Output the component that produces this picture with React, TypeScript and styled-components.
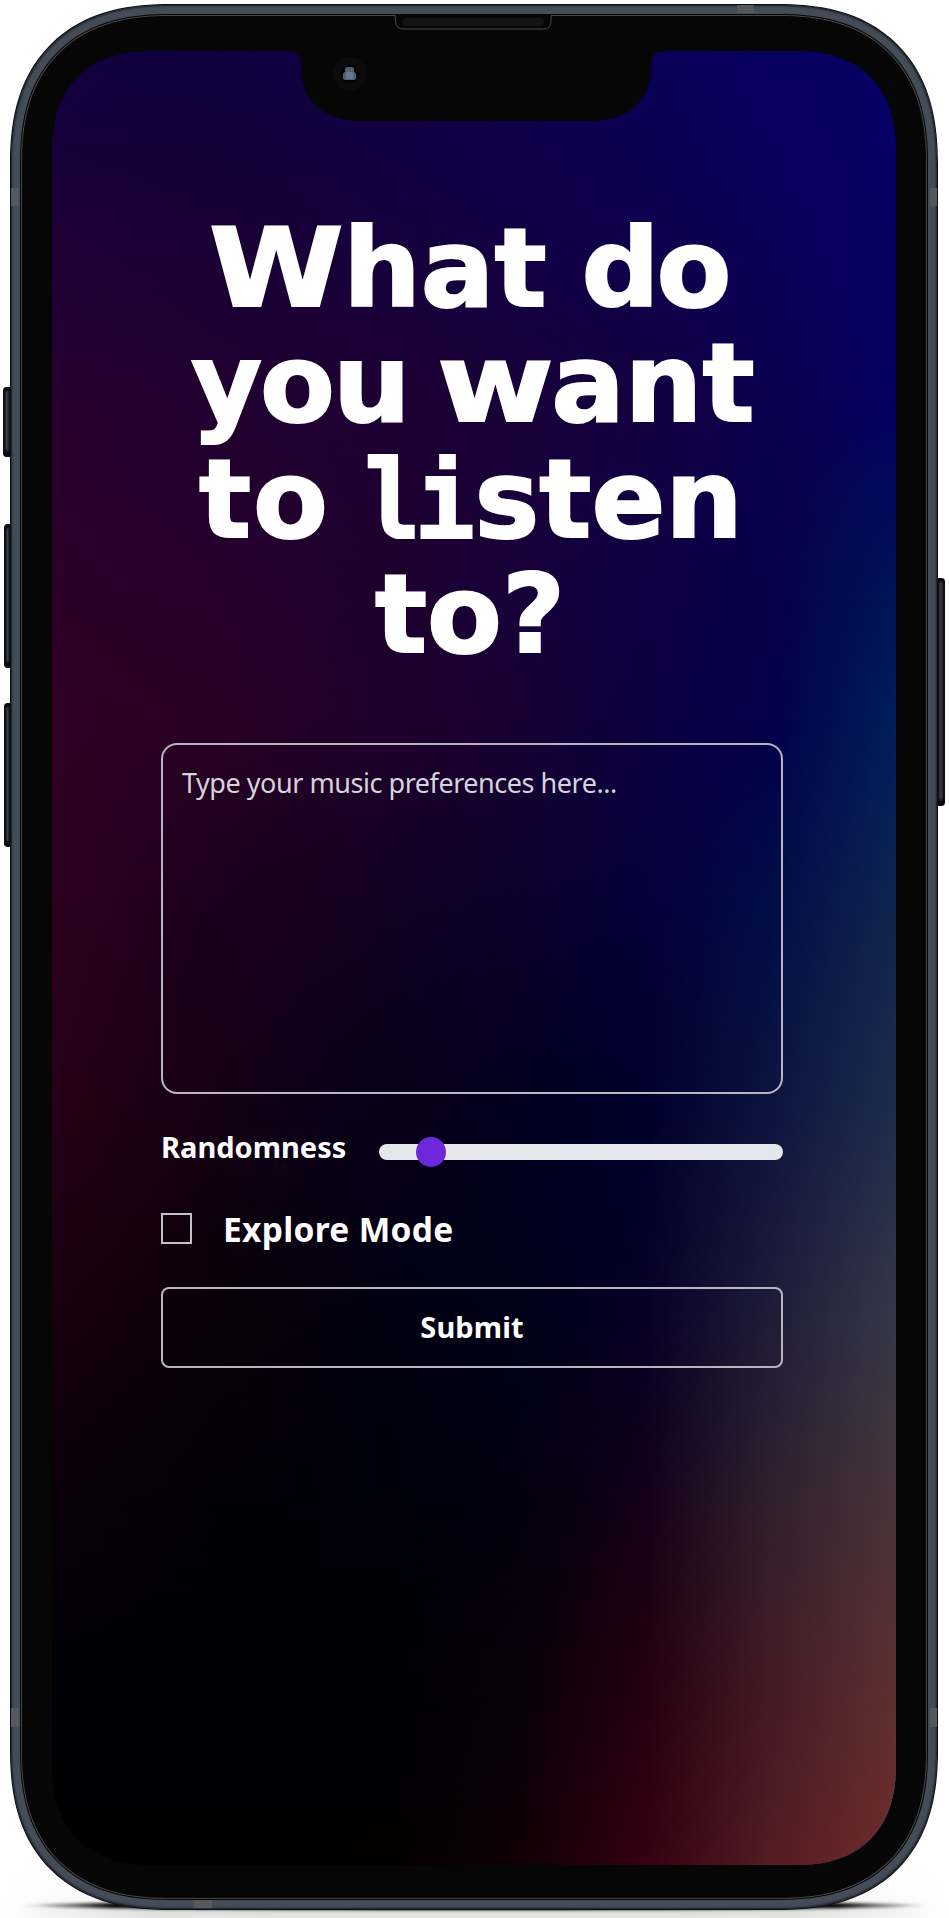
import React, { useState } from "react";
import styled, { createGlobalStyle, css } from "styled-components";

const GlobalStyle = createGlobalStyle`
  *, *::before, *::after { box-sizing: border-box; }
  body { margin: 0; background: #fff; overflow: hidden; }
  button, textarea, input { font: inherit; }
`;

const font = `"Noto Sans", "Open Sans", sans-serif`;

/* Continuous-curvature corners where the browser has them, plain arcs elsewhere. */
const corner = (arc: number, smooth: number) => css`
  border-radius: ${arc}px;
  @supports (corner-shape: superellipse(1.25)) {
    border-radius: ${smooth}px;
    corner-shape: superellipse(1.25);
  }
`;

/* Colour mesh: every row is a horizontal gradient, faded into the next one. */
const meshStops = [0, 20, 40, 55, 70, 85, 100];
const mesh: { y: number; colors: string[] }[] = [
  { y: 0, colors: ["#11003f", "#0f003f", "#100044", "#0c004e", "#090056", "#070060", "#060064"] },
  { y: 149, colors: ["#1b0038", "#170036", "#15003f", "#110046", "#0d0050", "#0a005a", "#060064"] },
  { y: 349, colors: ["#290030", "#210031", "#1d0033", "#190039", "#14003f", "#0b0050", "#04005e"] },
  { y: 549, colors: ["#2c0028", "#26002a", "#1e002e", "#18003a", "#100042", "#070048", "#00145a"] },
  { y: 669, colors: ["#310022", "#280025", "#1e002b", "#180033", "#0d003f", "#03004a", "#001f5a"] },
  { y: 849, colors: ["#2c001e", "#1c001c", "#120022", "#0c002c", "#05003a", "#020c46", "#0f2550"] },
  { y: 1049, colors: ["#280018", "#140014", "#09001a", "#040020", "#00002c", "#0c1440", "#1e2c4c"] },
  { y: 1269, colors: ["#18000e", "#090009", "#000010", "#000018", "#070026", "#201c38", "#363848"] },
  { y: 1449, colors: ["#0a000a", "#020008", "#00000c", "#02000e", "#140018", "#30202e", "#48343a"] },
  { y: 1649, colors: ["#000006", "#000006", "#000006", "#08000a", "#25000f", "#451a24", "#5f3030"] },
  { y: 1815, colors: ["#000000", "#000000", "#020000", "#100004", "#350012", "#541c22", "#702c2c"] },
];

const Stage = styled.main`
  position: relative;
  width: 949px;
  height: 1918px;
  padding: 4px 10px 0;
  background: #fff;
  overflow: hidden;
`;

const FloorShade = styled.div`
  position: absolute;
  left: 0;
  right: 0;
  bottom: 0;
  height: 60px;
  background: linear-gradient(to bottom, #fff, #f3f3f3 70%, #dcdcdc 88%, #e6e6e6);
  mask-image: linear-gradient(to right, transparent, #000 16%, #000 84%, transparent);
`;

const Contact = styled.div`
  position: absolute;
  left: 22px;
  right: 22px;
  bottom: 8px;
  height: 9px;
  border-radius: 50%;
  background: linear-gradient(to right, transparent, #000 10%, #000 90%, transparent);
  filter: blur(1.5px);
`;

const SideButton = styled.div<{ $side: "left" | "right"; $top: number; $height: number; $width: number }>`
  position: absolute;
  ${(p) => (p.$side === "left" ? `left: ${11 - p.$width}px;` : `right: ${12 - p.$width}px;`)}
  top: ${(p) => p.$top}px;
  width: ${(p) => p.$width}px;
  height: ${(p) => p.$height}px;
  border: 1px solid #0b0d11;
  border-radius: ${(p) => (p.$side === "left" ? "3px 0 0 3px" : "0 3px 3px 0")};
  background: linear-gradient(to right, #1b1f27, #3b424d 50%, #171a21);
  box-shadow: inset 0 3px 2px #08090c, inset 0 -5px 3px #08090c;
`;

const Frame = styled.div`
  position: relative;
  width: 928px;
  height: 1906px;
  padding: 1px;
  ${corner(136, 160)}
  background: #0b0e12;
`;

const Rail = styled.div`
  width: 100%;
  height: 100%;
  padding: 9px;
  ${corner(135, 159)}
  background: #444c58;
  box-shadow: inset 0 0 2px 1px #1c2027;
`;

const Seam = styled.div`
  width: 100%;
  height: 100%;
  padding: 1px;
  ${corner(126, 149)}
  background: #050505;
`;

const Bezel = styled.div`
  position: relative;
  width: 100%;
  height: 100%;
  padding: 35px 30px 35px;
  border: 1px solid #4a4846;
  ${corner(125, 148)}
  background: #060606;
`;

const AntennaBand = styled.div<{ $x: number; $y: number; $w: number; $h: number }>`
  position: absolute;
  left: ${(p) => p.$x}px;
  top: ${(p) => p.$y}px;
  width: ${(p) => p.$w}px;
  height: ${(p) => p.$h}px;
  background: #56595c;
`;

const Screen = styled.section`
  position: relative;
  width: 844px;
  height: 1814px;
  ${corner(88, 102)}
  overflow: hidden;
`;

const MeshRow = styled.div<{ $colors: string[]; $from: number; $to: number }>`
  position: absolute;
  inset: 0;
  background: linear-gradient(
    to right,
    ${(p) => p.$colors.map((c, i) => `${c} ${meshStops[i]}%`).join(", ")}
  );
  ${(p) => p.$to > 0 && `mask-image: linear-gradient(to bottom, transparent ${p.$from}px, #000 ${p.$to}px);`}
`;

const HardwareArt = styled.svg`
  position: absolute;
  left: 0;
  top: 0;
  pointer-events: none;
`;

const Content = styled.form`
  position: relative;
  display: flex;
  flex-direction: column;
  width: 622px;
  margin: 0 0 0 109px;
  padding-top: 160px;
  color: #fff;
  font-family: ${font};
`;

const Title = styled.h1`
  display: flex;
  flex-direction: column;
  margin: 0 0 70px;
  font: 700 109px/115.4px "DejaVu Sans", sans-serif;
  color: #fff;
  -webkit-text-stroke: 2px #fff;
`;

const TitleLine = styled.span<{ $indent: number; $gap?: number }>`
  display: flex;
  gap: ${(p) => p.$gap ?? 0}px;
  height: 115.4px;
  padding-left: ${(p) => p.$indent}px;
  white-space: nowrap;
`;

const Word = styled.span<{ $spacing?: number }>`
  letter-spacing: ${(p) => p.$spacing ?? 0}px;
`;

const Wide = styled.span<{ $scale: number; $extra: number }>`
  display: inline-block;
  margin-right: ${(p) => p.$extra}px;
  transform: scaleX(${(p) => p.$scale});
  transform-origin: left;
`;

const Slab = styled.span`
  display: inline-block;
  margin-right: -19px;
  transform: scaleX(0.86);
  transform-origin: left;
  font-family: "Liberation Mono", monospace;
  font-size: 112px;
  line-height: 1;
  letter-spacing: 0;
  -webkit-text-stroke: 4px #fff;
`;

const Preferences = styled.textarea`
  display: block;
  width: 622px;
  height: 351px;
  padding: 20px 19px;
  border: 2px solid #b9b4c2;
  border-radius: 16px;
  outline: none;
  resize: none;
  background: transparent;
  color: #fff;
  font-size: 27px;
  line-height: 36px;
  letter-spacing: -0.46px;
  &::placeholder { color: #d5d2dc; opacity: 1; }
`;

const RangeRow = styled.div`
  display: flex;
  align-items: center;
  justify-content: space-between;
  height: 44px;
  margin-top: 34px;
`;

const RangeLabel = styled.label`
  font-size: 29px;
  font-weight: 700;
  line-height: 40px;
  letter-spacing: 0;
  margin-top: -6px;
`;

const Range = styled.input`
  appearance: none;
  width: 404px;
  height: 16px;
  margin: 4px 0 0;
  border-radius: 8px;
  background: #e5e7eb;
  &::-webkit-slider-thumb {
    appearance: none;
    width: 30px;
    height: 30px;
    border-radius: 50%;
    background: #6d28d9;
  }
`;

const CheckRow = styled.label`
  display: flex;
  align-items: center;
  gap: 31px;
  height: 44px;
  margin-top: 35px;
  font-size: 33.5px;
  font-weight: 700;
  line-height: 44px;
  letter-spacing: 0.3px;
`;

const Check = styled.input`
  appearance: none;
  width: 31px;
  height: 31px;
  margin: 0;
  border: 2px solid #c4c0ca;
  &:checked { background: #6d28d9; }
`;

const Submit = styled.button`
  width: 622px;
  height: 81px;
  margin-top: 36px;
  padding: 0 0 1px;
  border: 2px solid #b9b4c2;
  border-radius: 8px;
  background: transparent;
  color: #fff;
  font-size: 29px;
  font-weight: 700;
  letter-spacing: 0.1px;
`;

function Hardware() {
  return (
    <HardwareArt width="949" height="140" viewBox="0 0 949 140">
      <path
        d="M286 51 C299 51 300.500 56 301 68 C301 98 321 121 361 121 L590 121 C631 121 651 98 651 68 C651.500 56 653 51 666 51 L666 40 L286 40Z"
        fill="#060606"
      />
      <path d="M395.500 14 V22 Q396 29 404 29 H543 Q551 29 551 22 V14Z" fill="#060606" />
      <path d="M394 15.500 Q395.500 15.500 395.500 18 V22 Q396 29 404 29 H543 Q551 29 551 22 V18 Q551 15.500 553 15.500" fill="none" stroke="#4a4846" />
      <rect x="402" y="18" width="142" height="8" rx="4" fill="#141414" />
      <circle cx="349.500" cy="74" r="17" fill="#0b0b0b" />
      <circle cx="349.500" cy="74" r="9" fill="#020203" />
      <rect x="345" y="67" width="9" height="7" rx="2.500" fill="#4f6172" />
      <rect x="343" y="72" width="13" height="8" rx="2.500" fill="#4f6172" />
      <rect x="346" y="72" width="7" height="7" rx="1" fill="#64798b" />
    </HardwareArt>
  );
}

export default function App() {
  const [randomness, setRandomness] = useState(10);
  return (
    <Stage>
      <GlobalStyle />
      <FloorShade />
      <Contact />
      <SideButton $side="left" $top={387} $height={70} $width={8} />
      <SideButton $side="left" $top={524} $height={144} $width={7} />
      <SideButton $side="left" $top={703} $height={144} $width={7} />
      <SideButton $side="right" $top={578} $height={228} $width={8} />
      <Frame>
        <Rail>
          <Seam>
            <Bezel>
              <Screen>
                {mesh.map((row, i) => (
                  <MeshRow key={row.y} $colors={row.colors} $from={i ? mesh[i - 1].y : 0} $to={row.y} />
                ))}
                <Content onSubmit={(e) => e.preventDefault()}>
                  <Title>
                    <TitleLine $indent={48} $gap={35}>
                      <Word $spacing={0}>
                        <Wide $scale={1.12} $extra={14}>W</Wide>hat
                      </Word>
                      <Word $spacing={-3}>do</Word>
                    </TitleLine>
                    <TitleLine $indent={30} $gap={28}>
                      <Word $spacing={-2}>you</Word>
                      <Word $spacing={0}>
                        <Wide $scale={1.16} $extra={14}>w</Wide>ant
                      </Word>
                    </TitleLine>
                    <TitleLine $indent={38} $gap={29}>
                      <Word $spacing={2}>to</Word>
                      <Word>
                        <Slab>li</Slab>sten
                      </Word>
                    </TitleLine>
                    <TitleLine $indent={214}>
                      <Word>to?</Word>
                    </TitleLine>
                  </Title>
                  <Preferences placeholder="Type your music preferences here..." />
                  <RangeRow>
                    <RangeLabel htmlFor="randomness">Randomness</RangeLabel>
                    <Range
                      id="randomness"
                      type="range"
                      value={randomness}
                      onChange={(e) => setRandomness(Number(e.target.value))}
                    />
                  </RangeRow>
                  <CheckRow>
                    <Check type="checkbox" />
                    Explore Mode
                  </CheckRow>
                  <Submit type="submit">Submit</Submit>
                </Content>
              </Screen>
            </Bezel>
          </Seam>
        </Rail>
      </Frame>
      <AntennaBand $x={737} $y={5} $w={17} $h={8} />
      <AntennaBand $x={194} $y={1900} $w={18} $h={8} />
      <AntennaBand $x={11} $y={188} $w={8} $h={18} />
      <AntennaBand $x={930} $y={188} $w={7} $h={18} />
      <AntennaBand $x={11} $y={1708} $w={8} $h={19} />
      <AntennaBand $x={930} $y={1708} $w={7} $h={19} />
      <Hardware />
    </Stage>
  );
}
